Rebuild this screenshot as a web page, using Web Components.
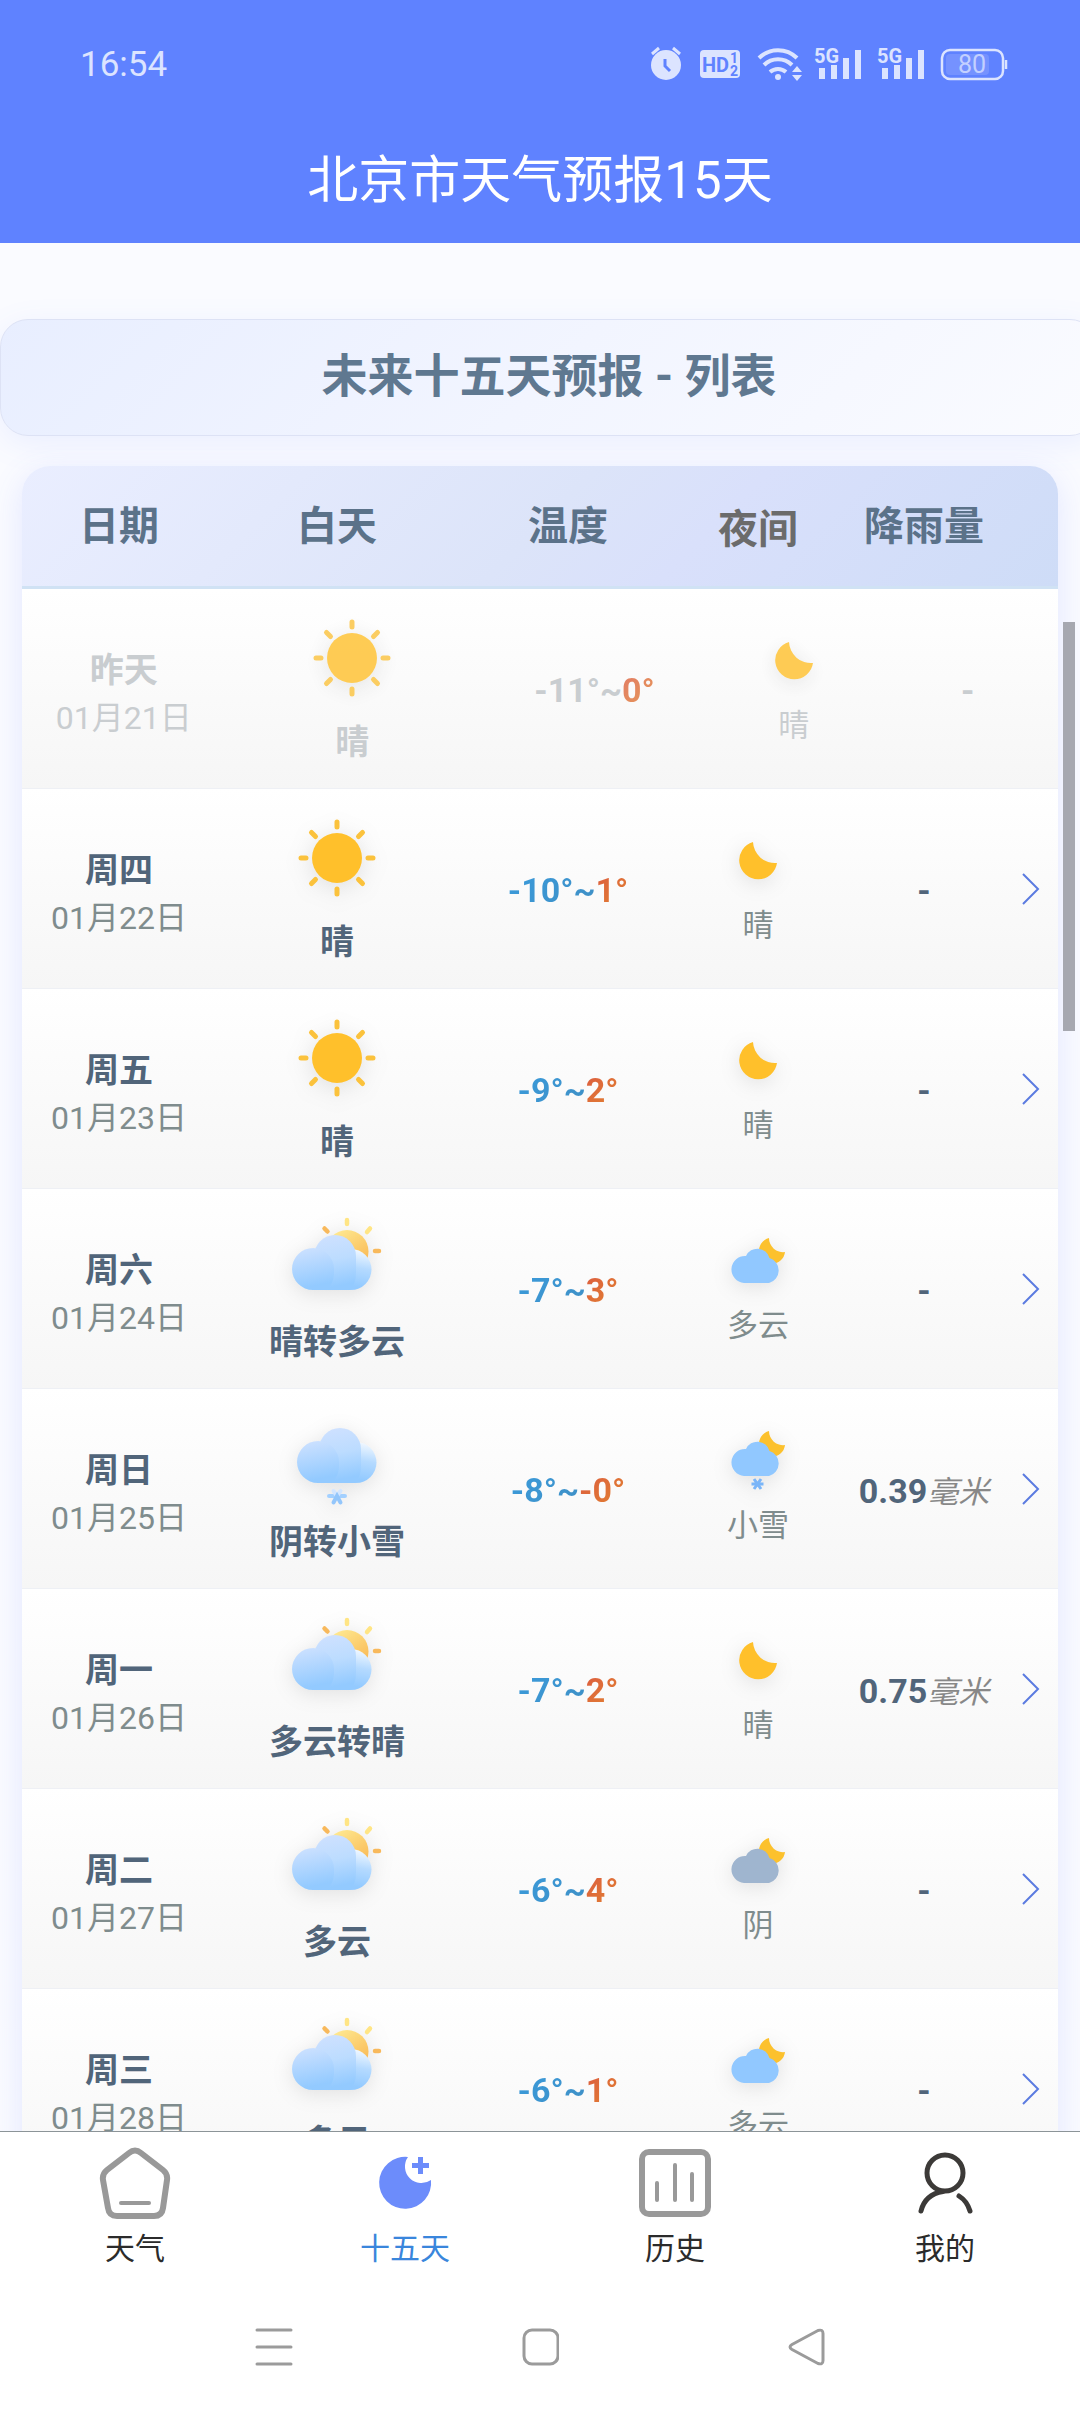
<!DOCTYPE html>
<html lang="zh-CN">
<head>
    <meta charset="UTF-8">
    <meta name="viewport" content="width=device-width, initial-scale=1.0">
    <title>北京市天气预报15天</title>
    <style>
        body {
            margin: 0;
            height: 100vh;
            display: flex;
            flex-direction: column;
            overflow: hidden;
            background: #fafbff;
            color: #51657a;
            font-family: Roboto, "Noto Sans CJK SC", sans-serif;
        }
    </style>
</head>
<body>
    <status-bar>16:54</status-bar>
    <app-header>北京市天气预报15天</app-header>
    <forecast-page>
        <section-banner>未来十五天预报 - 列表</section-banner>
        <forecast-table></forecast-table>
    </forecast-page>
    <tab-bar>
        <tab-item icon="home">天气</tab-item>
        <tab-item icon="days" active>十五天</tab-item>
        <tab-item icon="history">历史</tab-item>
        <tab-item icon="mine">我的</tab-item>
    </tab-bar>
    <system-nav></system-nav>

    <template id="status-bar">
        <style>
            :host {
                display: flex;
                justify-content: space-between;
                align-items: center;
                height: 60px;
                padding: 34px 72px 22px 80px;
                background: #5f82ff;
                color: #dce4ff;
                font-size: 35px;
            }
            .icons { display: flex; align-items: center; gap: 12px; }
            svg { display: block; overflow: visible; }
            text { font-family: Roboto, sans-serif; }
        </style>
        <span><slot></slot></span>
        <div class="icons">
            <svg width="36" height="36" viewBox="0 0 36 36" fill="#dce4ff">
                <circle cx="16" cy="19" r="15"/>
                <path d="M2 8 9 2M30 8 23 2" stroke="#dce4ff" stroke-width="3"/>
                <path d="M15 13v7l5 5" fill="none" stroke="#5f82ff" stroke-width="3"/>
            </svg>
            <svg width="46" height="36" viewBox="0 0 46 36">
                <rect x="2" y="4" width="40" height="28" rx="4" fill="#dce4ff"/>
                <g fill="#5f82ff" font-weight="700">
                    <text x="4" y="26" font-size="20">HD</text>
                    <text x="32" y="17" font-size="14">1</text>
                    <text x="32" y="30" font-size="14">2</text>
                </g>
            </svg>
            <svg width="46" height="36" viewBox="0 0 46 36" fill="none" stroke="#dce4ff" stroke-width="4">
                <path d="M3 12a27 27 0 0 1 38 0M8 19a20 20 0 0 1 28 0M14 26a12 12 0 0 1 16 0"/>
                <circle cx="22" cy="31" r="3" fill="#dce4ff" stroke="none"/>
                <path d="M36 26l5-6 5 6zM36 29h10l-5 6z" fill="#dce4ff" stroke="none"/>
            </svg>
            <svg width="51" height="36" viewBox="0 0 51 36">
                <text x="0" y="17" font-size="20" font-weight="700" fill="#dce4ff">5G</text>
                <path d="M8 22v11M20 19v14M32 12v21M44 4v29" stroke="#dce4ff" stroke-width="6"/>
            </svg>
            <svg width="51" height="36" viewBox="0 0 51 36">
                <text x="0" y="17" font-size="20" font-weight="700" fill="#dce4ff">5G</text>
                <path d="M8 22v11M20 19v14M32 12v21M44 4v29" stroke="#dce4ff" stroke-width="6"/>
            </svg>
            <svg width="68" height="36" viewBox="0 0 68 36">
                <rect x="2" y="4" width="61" height="29" rx="8" fill="none" stroke="#dce4ff" stroke-width="2.5"/>
                <rect x="6" y="8" width="43" height="21" rx="4" fill="#7592ff"/>
                <path d="M66 14v9" stroke="#dce4ff" stroke-width="2.5"/>
                <text x="32" y="27" font-size="25" text-anchor="middle" fill="#c3d0ff">80</text>
            </svg>
        </div>
    </template>

    <template id="app-header">
        <style>
            :host {
                display: block;
                padding: 31px 0 28px;
                background: #5f82ff;
                color: #fff;
                text-align: center;
            }
            h1 { margin: 0; font-size: 51px; font-weight: 400; line-height: 68px; }
        </style>
        <h1><slot></slot></h1>
    </template>

    <template id="forecast-page">
        <style>
            :host {
                display: flex;
                flex-direction: column;
                gap: 30px;
                flex: 1;
                min-height: 0;
                padding-top: 76px;
                overflow: hidden;
                position: relative;
            }
            .thumb {
                position: absolute;
                top: 379px;
                right: 5px;
                width: 12px;
                height: 409px;
                background: #a6a8b0;
            }
        </style>
        <slot></slot>
        <div class="thumb"></div>
    </template>

    <template id="section-banner">
        <style>
            :host {
                display: block;
                flex: none;
                margin-right: -18px;
                padding: 23px 0 25px;
                border: 1px solid #dde2f5;
                border-radius: 28px;
                background: linear-gradient(135deg, #e8eeff, #f2f5ff 50%, #fafbff);
                box-shadow: 0 8px 32px rgba(95, 130, 255, .1);
                color: #5f7890;
                text-align: center;
            }
            h2 { margin: 0; font-size: 46px; line-height: 67px; }
        </style>
        <h2><slot></slot></h2>
    </template>

    <template id="forecast-table">
        <style>
            :host { display: block; padding: 0 22px; }
            table {
                display: block;
                border-radius: 28px 28px 0 0;
                box-shadow: 0 8px 32px rgba(95, 115, 255, .15);
                font-size: 34px;
            }
            thead, tbody { display: block; }
            tr { display: flex; }
            th, td {
                display: flex;
                flex-direction: column;
                align-items: center;
                justify-content: center;
                box-sizing: border-box;
                min-width: 0;
                padding: 0;
                white-space: nowrap;
            }
            .date { flex: 194; }
            .day { flex: 242; }
            .temp { flex: 220; }
            .night { flex: 160; }
            .rain { flex: 172; }
            .more { flex: none; width: 48px; }
            thead tr {
                height: 120px;
                border-bottom: 3px solid #d0e2f4;
                border-radius: 28px 28px 0 0;
                background: linear-gradient(135deg, #eaeeff, #dce4f9 50%, #d9e0fb 65%, #cedcf7);
                color: #5b7289;
                font-size: 40px;
            }
            thead th { padding-bottom: 6px; }
            thead .night { color: #6b6b6b; padding-bottom: 0; }
            tbody tr {
                box-sizing: border-box;
                height: 200px;
                border-bottom: 1px solid #eef0f5;
                background: linear-gradient(#fff, #f6f6f6);
            }
            td.date { padding-top: 10px; line-height: 48px; font-weight: 700; }
            td.date time { color: #7f8c8d; font-size: 32px; font-weight: 400; }
            td.day { gap: 18px; padding-bottom: 4px; line-height: 40px; font-weight: 700; }
            td.day weather-icon { width: 92px; height: 92px; }
            td.temp, td.rain { padding-top: 2px; }
            td.night { gap: 16px; padding-bottom: 2px; line-height: 40px; font-size: 31px; color: #7f8c8d; }
            td.night weather-icon { width: 60px; height: 60px; }
            td.rain { font-weight: 700; }
            td.rain em { color: #888; font-size: 31px; font-weight: 400; }
            td.more { padding-right: 6px; }
            td a { display: block; }
            td svg { display: block; }
            .past td, .past td time { color: #c9cdd0; }
            .past weather-icon { opacity: .8; }
        </style>
        <table>
            <thead>
                <tr>
                    <th class="date">日期</th>
                    <th class="day">白天</th>
                    <th class="temp">温度</th>
                    <th class="night">夜间</th>
                    <th class="rain">降雨量</th>
                    <th class="more"></th>
                </tr>
            </thead>
            <tbody></tbody>
        </table>
    </template>

    <template id="temp-range">
        <style>
            :host { display: block; font-size: 34px; font-weight: 700; }
            span { -webkit-background-clip: text; background-clip: text; color: transparent; }
            .low { background-image: linear-gradient(135deg, #3a9bdc, #3f8fc4); }
            .high { background-image: linear-gradient(135deg, #dc5a40, #e2852f); }
            :host([past]) .low { background-image: none; color: #c9cdd0; }
            :host([past]) .high { opacity: .8; }
        </style>
        <span class="low"><slot name="low"></slot>~</span><span class="high"><slot name="high"></slot></span>
    </template>

    <template id="tab-bar">
        <style>
            :host {
                display: block;
                flex: none;
                border-top: 1px solid #8c9498;
                background: #fff;
            }
            nav { display: flex; padding: 15px 0 11px; }
        </style>
        <nav><slot></slot></nav>
    </template>

    <template id="tab-item">
        <style>
            :host { display: block; flex: 1; color: #2b2b2b; }
            :host([active]) { color: #3a86dc; }
            a {
                display: flex;
                flex-direction: column;
                align-items: center;
                gap: 10px;
                color: inherit;
                font-size: 30px;
                line-height: 40px;
                text-decoration: none;
            }
            svg { display: block; width: 72px; height: 72px; }
        </style>
        <a href="#"><svg viewBox="0 0 72 72"></svg><span><slot></slot></span></a>
    </template>

    <template id="system-nav">
        <style>
            :host {
                display: flex;
                flex: none;
                height: 134px;
                padding: 0 13%;
                background: #fff;
            }
            button { flex: 1; display: flex; align-items: center; justify-content: center; padding: 0; border: 0; background: none; }
            svg { fill: none; stroke: #9b9b9b; stroke-width: 3; stroke-linecap: round; stroke-linejoin: round; }
        </style>
        <button aria-label="菜单"><svg width="38" height="38"><path d="M2 2h34M2 19h34M2 36h34"/></svg></button>
        <button aria-label="主页"><svg width="38" height="38"><rect x="3" y="2" width="34" height="34" rx="8"/></svg></button>
        <button aria-label="返回"><svg width="38" height="38"><path d="M5 16.5 31 2.5q5-1.500 5 3v27q0 4.500-5 3L5 21.500q-4-2.500 0-5z"/></svg></button>
    </template>

    <script>
        const CHEVRON = `<svg width="18" height="32" fill="none" stroke="#5b7be0" stroke-width="2"><path d="M1 1 16 16 1 31"/></svg>`;

        const GRADIENTS = `
            <defs>
                <linearGradient id="left" gradientUnits="userSpaceOnUse" x1="14" y1="34" x2="22" y2="74">
                    <stop offset="0" stop-color="#cfe2ff"/><stop offset="1" stop-color="#93caff"/>
                </linearGradient>
                <linearGradient id="mid" gradientUnits="userSpaceOnUse" x1="36" y1="22" x2="46" y2="74">
                    <stop offset="0" stop-color="#cfe1ff"/><stop offset=".5" stop-color="#bcdcff"/><stop offset="1" stop-color="#93caff"/>
                </linearGradient>
                <linearGradient id="right" gradientUnits="userSpaceOnUse" x1="68" y1="37" x2="62" y2="74">
                    <stop offset="0" stop-color="#f3f9ff"/><stop offset=".5" stop-color="#b5daff"/><stop offset="1" stop-color="#93caff"/>
                </linearGradient>
                <linearGradient id="sun" x1="0" y1="0" x2=".7" y2="1">
                    <stop offset="0" stop-color="#fff09a"/><stop offset="1" stop-color="#f9b650"/>
                </linearGradient>
            </defs>`;

        // 白天的渐变云朵，右、中、左三层叠放，底部颜色一致
        const DAY_CLOUD = `
            <circle cx="60" cy="57.5" r="20.5" fill="url(#right)"/>
            <path d="M23 44a21 21 0 0 1 42 0v16q0 12-6 18H23z" fill="url(#mid)"/>
            <path d="M22 36a21 21 0 0 0 0 42h14q8-8 7-21a21 21 0 0 0-21-21z" fill="url(#left)"/>`;

        const NIGHT_CLOUD = `<path d="M16 53a13 13 0 1 1 2-27 12.5 12.5 0 0 1 23.5 2A13 13 0 0 1 41 53z"/>`;
        const SMALL_MOON = `<path d="M41 8A13 13 0 1 0 57 22 14 14 0 0 1 41 8z" fill="#fcc12d"/>`;

        const WEATHER = {
            "sunny": [92, `
                <g fill="#ffc02b" stroke="#fbc23c" stroke-width="5" stroke-linecap="round">
                    <circle cx="46" cy="46" r="25" stroke="none"/>
                    <path d="M46 10v5M46 77v5M10 46h5M77 46h5M20.5 20.5l4 4M67.5 67.5l4 4M71.5 20.5l-4 4M24.5 67.5l-4 4"/>
                </g>`],
            "partly": [92, GRADIENTS + `
                <circle cx="56" cy="39.5" r="21.5" fill="url(#sun)"/>
                <g stroke-width="4.5" stroke-linecap="round">
                    <path d="M56 8v4M79 16.5l-3 3.5" stroke="#ffe585"/>
                    <path d="M33.5 16.5l3 3M84 39h4" stroke="#f8b95c"/>
                </g>` + DAY_CLOUD],
            "snow": [92, GRADIENTS + `
                <g transform="translate(5 -7)">${DAY_CLOUD}</g>
                <path d="M38 84h16" stroke="#a3d0ff" stroke-width="4" stroke-linecap="round"/>
                <path d="M42.5 79 46 84l3.5-5" fill="none" stroke="#d3e6ff" stroke-width="4" stroke-linecap="round"/>
                <path d="M42.5 90.5 46 84l3.5 6.5" fill="none" stroke="#93c6fb" stroke-width="4" stroke-linecap="round"/>`],
            "moon": [60, `<path d="M25 12A19 19 0 1 0 49 33 22 22 0 0 1 25 12z" fill="#ffc02b"/>`],
            "night-cloud": [60, SMALL_MOON + `<g fill="#91c8ff">${NIGHT_CLOUD}</g>`],
            "night-overcast": [60, SMALL_MOON + `<g fill="#9fb5cf">${NIGHT_CLOUD}</g>`],
            "night-snow": [60, `
                <g transform="translate(0 -7)">${SMALL_MOON}<g fill="#91c8ff">${NIGHT_CLOUD}</g></g>
                <path d="M23.5 54h12M26 49l7 10M33 49l-7 10" stroke="#7ab5f8" stroke-width="3"/>`],
        };

        const TAB_ICONS = {
            home: `
                <path d="M30 6q6-5 12 0l22 17q5 4 4 10l-4 28q-1 8-9 8H18q-8 0-9-8L4 33q-1-6 4-10z" fill="none" stroke="#999" stroke-width="6"/>
                <path d="M22 56h28" stroke="#999" stroke-width="4" stroke-linecap="round"/>`,
            days: `
                <path d="M39 10A26 26 0 1 0 62 33 16.5 16.5 0 0 1 39 10z" fill="#6c8cfb"/>
                <path d="M51.5 10v17M43 18.5h17" stroke="#6c8cfb" stroke-width="5"/>`,
            history: `
                <rect x="3" y="5" width="66" height="62" rx="7" fill="none" stroke="#999" stroke-width="6"/>
                <path d="M18 36v17M36 18v35M53 27v26" stroke="#999" stroke-width="4" stroke-linecap="round"/>`,
            mine: `
                <g fill="none" stroke="#3c3a38" stroke-width="5" stroke-linecap="round">
                    <circle cx="36" cy="26" r="18"/>
                    <path d="M34 44.5q-18 3-22 19.5M50 49q8 5 11 15"/>
                </g>`,
        };

        // 星期、日期、白天、最低温、最高温、夜间、降雨量
        const DAYS = [
            ["昨天", "01月21日", "sunny", "晴", "-11°", "0°", "moon", "晴", ""],
            ["周四", "01月22日", "sunny", "晴", "-10°", "1°", "moon", "晴", ""],
            ["周五", "01月23日", "sunny", "晴", "-9°", "2°", "moon", "晴", ""],
            ["周六", "01月24日", "partly", "晴转多云", "-7°", "3°", "night-cloud", "多云", ""],
            ["周日", "01月25日", "snow", "阴转小雪", "-8°", "-0°", "night-snow", "小雪", "0.39"],
            ["周一", "01月26日", "partly", "多云转晴", "-7°", "2°", "moon", "晴", "0.75"],
            ["周二", "01月27日", "partly", "多云", "-6°", "4°", "night-overcast", "阴", ""],
            ["周三", "01月28日", "partly", "多云", "-6°", "1°", "night-cloud", "多云", ""],
        ];

        class TemplateElement extends HTMLElement {
            constructor() {
                super();
                const template = document.getElementById(this.localName);
                this.attachShadow({ mode: "open" }).appendChild(template.content.cloneNode(true));
            }
        }

        class WeatherIcon extends HTMLElement {
            connectedCallback() {
                const [size, shapes] = WEATHER[this.getAttribute("name")];
                const root = this.shadowRoot || this.attachShadow({ mode: "open" });
                root.innerHTML = `
                    <style>
                        :host { display: block; }
                        svg { display: block; width: 100%; height: 100%; overflow: visible; filter: drop-shadow(0 4px 10px rgba(0, 0, 0, .1)); }
                    </style>
                    <svg viewBox="0 0 ${size} ${size}">${shapes}</svg>`;
            }
        }

        class ForecastTable extends TemplateElement {
            connectedCallback() {
                this.shadowRoot.querySelector("tbody").innerHTML = DAYS.map((day, i) => this.renderRow(day, i === 0)).join("");
            }

            renderRow([week, date, dayIcon, dayText, low, high, nightIcon, nightText, rain], past) {
                return `
                    <tr class="${past ? "past" : ""}">
                        <td class="date"><span>${week}</span><time>${date}</time></td>
                        <td class="day"><weather-icon name="${dayIcon}"></weather-icon><span>${dayText}</span></td>
                        <td class="temp">
                            <temp-range ${past ? "past" : ""}><span slot="low">${low}</span><span slot="high">${high}</span></temp-range>
                        </td>
                        <td class="night"><weather-icon name="${nightIcon}"></weather-icon><span>${nightText}</span></td>
                        <td class="rain"><span>${rain ? rain + "<em>毫米</em>" : "-"}</span></td>
                        ${past ? "" : `<td class="more"><a href="#" aria-label="${date}">${CHEVRON}</a></td>`}
                    </tr>`;
            }
        }

        class TabItem extends TemplateElement {
            connectedCallback() {
                this.shadowRoot.querySelector("svg").innerHTML = TAB_ICONS[this.getAttribute("icon")];
            }
        }

        customElements.define("weather-icon", WeatherIcon);
        customElements.define("forecast-table", ForecastTable);
        customElements.define("tab-item", TabItem);
        ["status-bar", "app-header", "forecast-page", "section-banner", "temp-range", "tab-bar", "system-nav"].forEach(name => {
            customElements.define(name, class extends TemplateElement {});
        });
    </script>
</body>
</html>
